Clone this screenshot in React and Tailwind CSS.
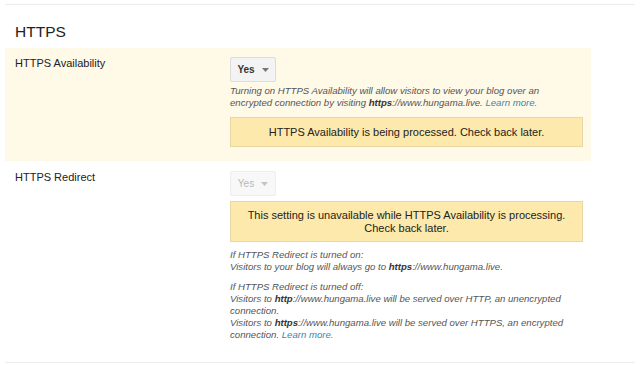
import React from 'react';

const font = { fontFamily: '"Liberation Sans", Arial, sans-serif' };

const SelectButton = ({ disabled }) => (
    <div
        className={`w-[46px] h-[25px] flex items-center justify-center gap-[7px] rounded-[2px] border text-[10px] ${disabled ? 'bg-[#f8f8f8] border-[#eeeeee] text-[#b8b8b8]' : 'bg-[#f3f3f3] border-[#dcdcdc] text-[#333] font-bold'}`}
    >
        <span>Yes</span>
        <svg width="7" height="4" viewBox="0 0 7 4">
            <path d="M0 0 L7 0 L3.5 4 Z" fill={disabled ? '#c4c4c4' : '#777'} />
        </svg>
    </div>
);

const Link = ({ children }) => <span className="text-[#3b86a8]">{children}</span>;

const App = () => {
    return (
        <div className="w-[640px] h-[365px] bg-white overflow-hidden text-[#222] flex flex-col" style={font}>
            <div className="mt-[4px] mx-[5px] border-t border-[#ececec]" />

            <h2 className="pl-[15px] pt-[18px] h-[43px] text-[15.5px] leading-[18px] text-[#222]">HTTPS</h2>

            <div className="mx-[5px] w-[586px] h-[113px] shrink-0 bg-[#fff9e8] flex pt-[9px]">
                <div className="w-[225px] pl-[10px] text-[11px] leading-[12px]">HTTPS Availability</div>
                <div className="flex flex-col">
                    <SelectButton />
                    <p className="mt-[3px] w-[360px] text-[9.6px] leading-[12px] italic text-[#555]">
                        Turning on HTTPS Availability will allow visitors to view your blog over an<br />encrypted connection by visiting <b className="text-[#333]">https</b>://www.hungama.live. <Link>Learn more.</Link>
                    </p>
                    <div className="mt-[8px] w-[353px] h-[30px] bg-[#fde9ab] border border-[#e7d7a4] flex items-center justify-center text-[11px] text-[#222]">
                        HTTPS Availability is being processed. Check back later.
                    </div>
                </div>
            </div>

            <div className="flex pt-[10px] h-[201px] shrink-0">
                <div className="w-[230px] pl-[15px] text-[11px] leading-[12px]">HTTPS Redirect</div>
                <div className="flex flex-col">
                    <SelectButton disabled />
                    <div className="mt-[5px] w-[353px] h-[41px] bg-[#fde9ab] border border-[#e7d7a4] flex items-center justify-center text-center text-[11px] leading-[13px] text-[#222]">
                        This setting is unavailable while HTTPS Availability is processing.<br />Check back later.
                    </div>
                    <div className="mt-[7px] w-[365px] text-[9.6px] leading-[12px] italic text-[#555] flex flex-col gap-[8px]">
                        <p>
                            If HTTPS Redirect is turned on:<br />
                            Visitors to your blog will always go to <b className="text-[#333]">https</b>://www.hungama.live.
                        </p>
                        <p>
                            If HTTPS Redirect is turned off:<br />
                            Visitors to <b className="text-[#333]">http</b>://www.hungama.live will be served over HTTP, an unencrypted<br />connection.<br />
                            Visitors to <b className="text-[#333]">https</b>://www.hungama.live will be served over HTTPS, an encrypted<br />connection. <Link>Learn more.</Link>
                        </p>
                    </div>
                </div>
            </div>

            <div className="mx-[5px] border-t border-[#ececec]" />
        </div>
    );
};

export default App;
